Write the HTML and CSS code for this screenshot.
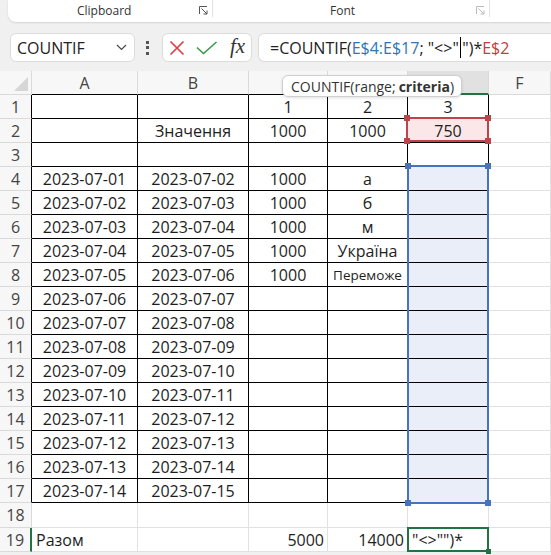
FILE: index.html
```html
<!DOCTYPE html>
<html>
<head>
<meta charset="utf-8">
<link rel="stylesheet" href="styles.css">
</head>
<body>
<div class="ribbon">
  <div class="grp grp-clip"><span class="grp-label">Clipboard</span><span class="launch"><svg width="9" height="9" viewBox="0 0 9 9"><path d="M0.5 8V0.5H8" fill="none" stroke="#555" stroke-width="1"/><path d="M2.5 2.5L8 8M8 4.5V8H4.5" fill="none" stroke="#555" stroke-width="1"/></svg></span></div>
  <div class="grp grp-font"><span class="grp-label">Font</span><span class="launch"><svg width="9" height="9" viewBox="0 0 9 9"><path d="M0.5 8V0.5H8" fill="none" stroke="#bbb" stroke-width="1"/><path d="M2.5 2.5L8 8M8 4.5V8H4.5" fill="none" stroke="#bbb" stroke-width="1"/></svg></span></div>
</div>

<div class="fbar">
  <div class="namebox"><span>COUNTIF</span><svg width="11" height="7" viewBox="0 0 11 7"><path d="M1 1l4.5 4.5L10 1" fill="none" stroke="#444" stroke-width="1.1"/></svg></div>
  <div class="dots"><i></i><i></i><i></i></div>
  <div class="btns">
    <svg class="ic-x" width="16" height="16" viewBox="0 0 16 16"><path d="M1.5 1.5L14.5 14.5M14.5 1.5L1.5 14.5" stroke="#e0393e" stroke-width="1.6" fill="none"/></svg>
    <svg class="ic-ok" width="22" height="14" viewBox="0 0 22 14"><path d="M1 6.5L7.5 12.5L20.5 1" stroke="#3a9a48" stroke-width="1.6" fill="none"/></svg>
    <span class="fx">fx</span>
  </div>
  <div class="formula">=COUNTIF(<span class="rb">E$4:E$17</span>; "&lt;&gt;"<span class="caret"></span>")*<span class="rr">E$2</span></div>
</div>

<div class="wrap">
  <div class="sheet">
    <div class="hd corner"></div><div class="hd cb">A</div><div class="hd cb">B</div><div class="hd cb">C</div><div class="hd cb">D</div><div class="hd ce">E</div><div class="hd">F</div>

    <div class="hd k">1</div><div class="b"></div><div class="b"></div><div class="b">1</div><div class="b">2</div><div class="b">3</div><div></div>
    <div class="hd k">2</div><div class="b"></div><div class="b">Значення</div><div class="b">1000</div><div class="b">1000</div><div class="b pink ov">750<div class="selbox red"><i class="tl"></i><i class="tr"></i><i class="bl2"></i><i class="br"></i></div></div><div></div>
    <div class="hd k">3</div><div class="b"></div><div class="b"></div><div class="b"></div><div class="b"></div><div class="b"></div><div></div>
    <div class="hd k">4</div><div class="b">2023-07-01</div><div class="b">2023-07-02</div><div class="b">1000</div><div class="b">а</div><div class="b blue ov"><div class="selbox bluebox"><i class="tl"></i><i class="tr"></i><i class="bl2"></i><i class="br"></i></div></div><div></div>
    <div class="hd k">5</div><div class="b">2023-07-02</div><div class="b">2023-07-03</div><div class="b">1000</div><div class="b">б</div><div class="b blue"></div><div></div>
    <div class="hd k">6</div><div class="b">2023-07-03</div><div class="b">2023-07-04</div><div class="b">1000</div><div class="b">м</div><div class="b blue"></div><div></div>
    <div class="hd k">7</div><div class="b">2023-07-04</div><div class="b">2023-07-05</div><div class="b">1000</div><div class="b">Україна</div><div class="b blue"></div><div></div>
    <div class="hd k">8</div><div class="b">2023-07-05</div><div class="b">2023-07-06</div><div class="b">1000</div><div class="b small">Переможе</div><div class="b blue"></div><div></div>
    <div class="hd k">9</div><div class="b">2023-07-06</div><div class="b">2023-07-07</div><div class="b"></div><div class="b"></div><div class="b blue"></div><div></div>
    <div class="hd k">10</div><div class="b">2023-07-07</div><div class="b">2023-07-08</div><div class="b"></div><div class="b"></div><div class="b blue"></div><div></div>
    <div class="hd k">11</div><div class="b">2023-07-08</div><div class="b">2023-07-09</div><div class="b"></div><div class="b"></div><div class="b blue"></div><div></div>
    <div class="hd k">12</div><div class="b">2023-07-09</div><div class="b">2023-07-10</div><div class="b"></div><div class="b"></div><div class="b blue"></div><div></div>
    <div class="hd k">13</div><div class="b">2023-07-10</div><div class="b">2023-07-11</div><div class="b"></div><div class="b"></div><div class="b blue"></div><div></div>
    <div class="hd k">14</div><div class="b">2023-07-11</div><div class="b">2023-07-12</div><div class="b"></div><div class="b"></div><div class="b blue"></div><div></div>
    <div class="hd k">15</div><div class="b">2023-07-12</div><div class="b">2023-07-13</div><div class="b"></div><div class="b"></div><div class="b blue"></div><div></div>
    <div class="hd k">16</div><div class="b">2023-07-13</div><div class="b">2023-07-14</div><div class="b"></div><div class="b"></div><div class="b blue"></div><div></div>
    <div class="hd k">17</div><div class="b">2023-07-14</div><div class="b">2023-07-15</div><div class="b"></div><div class="b"></div><div class="b blue"></div><div></div>
    <div class="hd">18</div><div></div><div></div><div></div><div></div><div></div><div></div>
    <div class="hd act">19</div><div class="l">Разом</div><div></div><div class="r">5000</div><div class="r">14000</div><div class="l ov">"&lt;&gt;"")*<div class="selbox green"><i class="br"></i></div></div><div></div>
  </div>
  <div class="tip">COUNTIF(range; <b>criteria</b>)</div>
</div>
</body>
</html>
```

FILE: styles.css
```css
* { box-sizing: border-box; }
body {
  margin: 0;
  width: 551px;
  height: 555px;
  overflow: hidden;
  background: #f0f0f0;
  font-family: "Open Sans", "Noto Sans", sans-serif;
  color: #222;
}

/* ribbon */
.ribbon {
  margin-left: 8px;
  height: 22px;
  background: #fff;
  border-bottom-left-radius: 8px;
  box-shadow: 0 1px 2px rgba(0,0,0,0.12);
  display: flex;
  font-size: 12px;
  color: #333;
}
.grp {
  display: flex;
  align-items: center;
  height: 17px;
  padding-top: 3px;
  border-right: 1px solid #e1e1e1;
}
.grp-clip { width: 205px; padding-left: 69px; }
.grp-font { width: 277px; padding-left: 117px; }
.launch { margin-left: auto; margin-right: 4px; display: flex; }

/* formula bar */
.fbar {
  display: flex;
  align-items: center;
  height: 29px;
  margin-top: 11px;
  padding-left: 10px;
}
.namebox {
  width: 125px;
  height: 29px;
  background: #fff;
  border: 1px solid #dcdcdc;
  border-radius: 6px;
  display: flex;
  align-items: center;
  justify-content: space-between;
  padding: 0 7px 0 6px;
  font-size: 16px;
  color: #222;
}
.dots {
  display: flex;
  flex-direction: column;
  gap: 2.5px;
  margin-left: 11px;
}
.dots i { display: block; width: 3px; height: 3px; background: #555; }
.btns {
  margin-left: 13px;
  width: 90px;
  height: 29px;
  background: #fff;
  border: 1px solid #dcdcdc;
  border-radius: 6px;
  display: flex;
  align-items: center;
  padding-left: 6px;
}
.ic-ok { margin-left: 11px; }
.fx {
  margin-left: 12px;
  font-family: "Liberation Serif", serif;
  font-style: italic;
  font-size: 21px;
  color: #333;
  line-height: 1;
  margin-top: -3px;
}
.formula {
  margin-left: 6px;
  flex: 1;
  height: 29px;
  background: #fff;
  border: 1px solid #dcdcdc;
  border-right: none;
  border-radius: 6px 0 0 6px;
  display: flex;
  align-items: center;
  padding-left: 11px;
  font-size: 16px;
  white-space: nowrap;
  color: #222;
}
.rb { color: #2e75b6; }
.rr { color: #c43b3b; }
.caret { display: inline-block; width: 1.5px; height: 21px; background: #000; margin: 0 1px; }

/* sheet */
.wrap { position: relative; margin-top: 9px; }
.sheet {
  display: grid;
  grid-template-columns: 32px 106px 111px 79px 80px 81px 62px;
  grid-template-rows: repeat(18, 24px) 25px 24px;
  background: #fff;
}
.sheet > div {
  border-right: 1px solid #e1e1e1;
  border-bottom: 1px solid #e1e1e1;
  display: flex;
  align-items: center;
  justify-content: center;
  font-size: 16px;
  white-space: nowrap;
  overflow: hidden;
  color: #1e1e1e;
}
.sheet > .hd {
  background: #f7f7f7;
  color: #444;
  border-color: #dadada;
}
.sheet > .corner { position: relative; }
.corner::after {
  content: "";
  position: absolute;
  right: 3px;
  bottom: 3px;
  border-style: solid;
  border-width: 0 0 14px 14px;
  border-color: transparent transparent #d6d6d6 transparent;
}
.sheet > .cb { border-bottom-color: #000; }
.sheet > .ce { background: #e1e1e1; border-bottom: 2px solid #217346; }
.sheet > .k { border-right-color: #000; }
.sheet > .act { border-right: 2px solid #217346; }
.sheet > .b { border-right-color: #000; border-bottom-color: #000; }
.sheet > .small { font-size: 13.5px; }
.sheet > .l { justify-content: flex-start; padding-left: 4px; }
.sheet > .r { justify-content: flex-end; padding-right: 3px; }
.sheet > .pink { background: #fbe7e8; }
.sheet > .blue { background: #e9eef8; }
.sheet > .ov { overflow: visible; position: relative; z-index: 2; }

.selbox { position: absolute; border: 2px solid; }
.selbox i { position: absolute; width: 6px; height: 6px; }
.selbox .tl { left: -4px; top: -4px; }
.selbox .tr { right: -4px; top: -4px; }
.selbox .bl2 { left: -4px; bottom: -4px; }
.selbox .br { right: -4px; bottom: -4px; }

.red { left: -2px; top: -2px; right: -1px; bottom: 0; border-color: #c0424b; }
.red i { background: #c0424b; }
.bluebox { left: -1px; top: -2px; width: 82px; height: 339px; border-color: #4673c0; }
.bluebox i { background: #4673c0; }
.green { left: -1px; top: -1px; right: -1px; bottom: -1px; border-color: #217346; }
.green i { background: #217346; width: 5px; height: 5px; right: -3px; bottom: -3px; }

.tip {
  position: absolute;
  left: 282px;
  top: 4px;
  width: 180px;
  height: 22px;
  background: #fff;
  border: 1px solid #cfcfcf;
  border-radius: 6px;
  box-shadow: 0 1px 3px rgba(0,0,0,0.12);
  font-size: 14px;
  color: #333;
  display: flex;
  align-items: center;
  padding-left: 8px;
  white-space: nowrap;
  z-index: 5;
}
.tip b { font-weight: 700; margin-left: 3px; }
```
